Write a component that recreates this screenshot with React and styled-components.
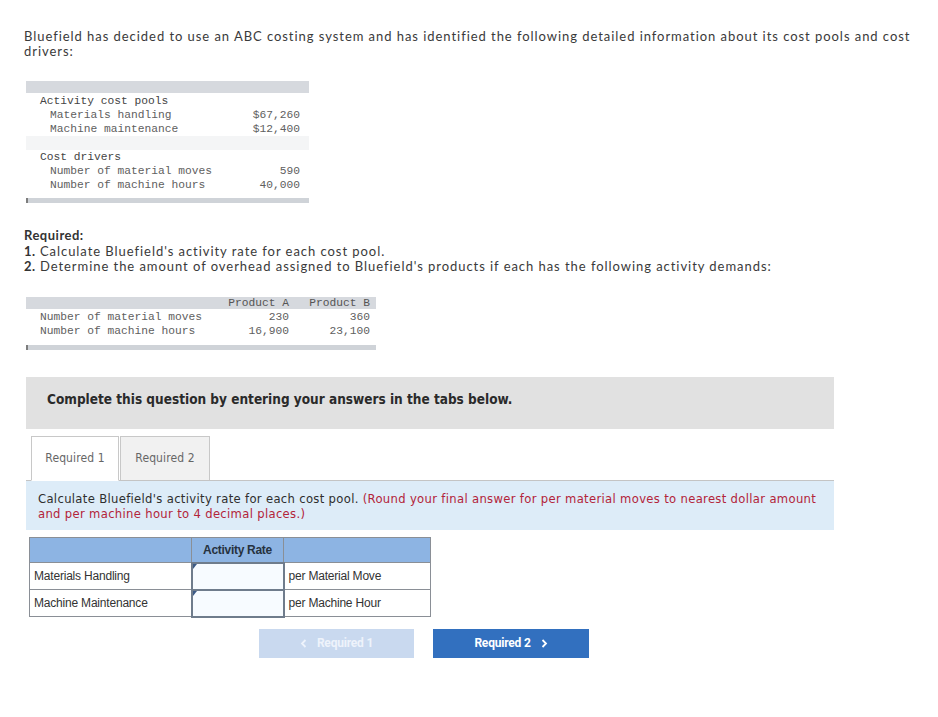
import React from 'react';
import styled, { createGlobalStyle } from 'styled-components';

const GlobalStyle = createGlobalStyle`
  body {
    margin: 0;
    background: #ffffff;
  }
`;

const Page = styled.div`
  padding: 29px 24px 40px 24px;
  font-family: Lato, "Open Sans", "Liberation Sans", sans-serif;
  color: #3a3a3a;
`;

const Intro = styled.p`
  margin: 0;
  font-size: 13px;
  line-height: 15px;
  letter-spacing: 0.95px;
  width: 910px;
`;

const MonoTable = styled.div`
  width: ${p => p.w}px;
  margin: ${p => p.top}px 0 0 2px;
  font-family: "Liberation Mono", "DejaVu Sans Mono", monospace;
  font-size: 11.25px;
  color: #5f5f5f;
`;

const HeadBar = styled.div`
  height: 12px;
  background: #d6d9de;
  margin-bottom: 1px;
  display: grid;
  grid-template-columns: ${p => p.cols || '1fr'};
  padding: 0 6px 0 14px;
  line-height: 12px;
  color: #555;
`;

const MonoRow = styled.div`
  height: 14px;
  line-height: 14px;
  display: grid;
  grid-template-columns: ${p => p.cols || '1fr auto'};
  padding: 0 ${p => p.right || 9}px 0 ${p => (p.indent ? 24 : 14)}px;
  background: ${p => (p.shade ? '#f4f5f6' : 'transparent')};
  color: ${p => (p.dark ? '#444' : '#606060')};
  white-space: nowrap;
`;

const Num = styled.span`
  text-align: right;
`;

const FootBar = styled.div`
  margin-top: ${p => p.gap}px;
  height: 5px;
  background: #cfd3d8;
  border-left: 2px solid #7d7d7d;
`;

const Required = styled.div`
  margin-top: 25px;
  font-size: 13px;
  line-height: 15.5px;
  letter-spacing: 0.95px;
`;

const Strong = styled.span`
  font-weight: 700;
  color: #333;
  letter-spacing: 0.5px;
`;

const Notice = styled.div`
  margin: 27px 0 0 2px;
  width: 808px;
  height: 52px;
  box-sizing: border-box;
  padding: 14px 21px 0 21px;
  background: #e1e1e1;
  font-family: "DejaVu Sans Condensed", "DejaVu Sans", sans-serif;
  font-weight: bold;
  font-size: 13.5px;
  line-height: 17px;
  color: #2a2a2a;
`;

const Panel = styled.div`
  margin: 7px 0 0 2px;
  width: 808px;
`;

const TabRow = styled.div`
  display: flex;
  padding-left: 5px;
  border-bottom: 1px solid #c4c4c4;
  height: 44px;
`;

const Tab = styled.div`
  box-sizing: border-box;
  width: ${p => p.w}px;
  height: ${p => (p.active ? 45 : 44)}px;
  border: 1px solid #c8c8c8;
  border-bottom: ${p => (p.active ? '1px solid #ffffff' : 'none')};
  background: ${p => (p.active ? '#ffffff' : '#f1f1f1')};
  margin-right: 1px;
  display: flex;
  align-items: center;
  justify-content: center;
  font-family: "DejaVu Sans Condensed", "DejaVu Sans", sans-serif;
  font-size: 12px;
  letter-spacing: 0.1px;
  color: #666;
  position: relative;
  z-index: 1;
`;

const Instruction = styled.div`
  background: #ddecf8;
  padding: 10px 12px 9px 12px;
  font-family: "DejaVu Sans Condensed", "DejaVu Sans", sans-serif;
  font-size: 12.9px;
  line-height: 15px;
  letter-spacing: 0.33px;
  color: #2e2e2e;
`;

const Hint = styled.span`
  color: #b3243a;
`;

const AnswerTable = styled.table`
  margin: 7px 0 0 3px;
  border-collapse: collapse;
  font-family: "Liberation Sans", Arial, sans-serif;
  font-size: 12px;
  color: #333;
`;

const HeadCell = styled.th`
  height: 24px;
  width: ${p => p.w}px;
  background: #8db4e3;
  border: 1px solid #8a8f96;
  font-weight: bold;
  font-size: 12px;
  color: #26323f;
  padding: 0;
  letter-spacing: -0.3px;
`;

const Cell = styled.td`
  height: 25px;
  border: 1px solid #8a8f96;
  padding: 0 0 0 4px;
  letter-spacing: -0.2px;
  white-space: nowrap;
`;

const InputCell = styled.td`
  height: 25px;
  border: 2px solid #6f7c8c;
  padding: 0;
  background: #f7fbff;
  position: relative;
`;

const Corner = styled.span`
  position: absolute;
  left: 0;
  top: 0;
  width: 0;
  height: 0;
  border-top: 5px solid #3c5a86;
  border-right: 4px solid transparent;
`;

const Nav = styled.div`
  display: flex;
  gap: 19px;
  margin-top: 11px;
  padding-left: 233px;
`;

const NavButton = styled.div`
  width: ${p => p.w}px;
  height: 29px;
  display: flex;
  align-items: center;
  justify-content: center;
  gap: 10px;
  background: ${p => (p.disabled ? '#c9d9ef' : '#3270bf')};
  color: ${p => (p.disabled ? '#eef3fb' : '#ffffff')};
  font-family: Roboto, "Liberation Sans", sans-serif;
  font-weight: bold;
  font-size: 12px;
  letter-spacing: -0.2px;
`;

const Chevron = ({ dir }) => (
  <svg width="7" height="9" viewBox="0 0 7 9">
    <path
      d={dir === 'left' ? 'M5.5 1 L2 4.5 L5.5 8' : 'M1.5 1 L5 4.5 L1.5 8'}
      fill="none"
      stroke="currentColor"
      strokeWidth="1.8"
    />
  </svg>
);

export default function App() {
  return (
    <Page>
      <GlobalStyle />
      <Intro>
        Bluefield has decided to use an ABC costing system and has identified the following detailed information about its cost pools and cost drivers:
      </Intro>

      <MonoTable w={283} top={22}>
        <HeadBar />
        <MonoRow dark>Activity cost pools</MonoRow>
        <MonoRow indent>
          <span>Materials handling</span>
          <Num>$67,260</Num>
        </MonoRow>
        <MonoRow indent>
          <span>Machine maintenance</span>
          <Num>$12,400</Num>
        </MonoRow>
        <MonoRow shade />
        <MonoRow dark>Cost drivers</MonoRow>
        <MonoRow indent>
          <span>Number of material moves</span>
          <Num>590</Num>
        </MonoRow>
        <MonoRow indent>
          <span>Number of machine hours</span>
          <Num>40,000</Num>
        </MonoRow>
        <FootBar gap={6} />
      </MonoTable>

      <Required>
        <Strong>Required:</Strong>
        <br />
        <Strong>1.</Strong> Calculate Bluefield's activity rate for each cost pool.
        <br />
        <Strong>2.</Strong> Determine the amount of overhead assigned to Bluefield's products if each has the following activity demands:
      </Required>

      <MonoTable w={350} top={22}>
        <HeadBar cols="175px 74px 81px">
          <span />
          <Num>Product A</Num>
          <Num>Product B</Num>
        </HeadBar>
        <MonoRow cols="175px 74px 81px" right={6}>
          <span>Number of material moves</span>
          <Num>230</Num>
          <Num>360</Num>
        </MonoRow>
        <MonoRow cols="175px 74px 81px" right={6}>
          <span>Number of machine hours</span>
          <Num>16,900</Num>
          <Num>23,100</Num>
        </MonoRow>
        <FootBar gap={7} />
      </MonoTable>

      <Notice>Complete this question by entering your answers in the tabs below.</Notice>

      <Panel>
        <TabRow>
          <Tab w={88} active>Required 1</Tab>
          <Tab w={90}>Required 2</Tab>
        </TabRow>
        <Instruction>
          Calculate Bluefield's activity rate for each cost pool.{' '}
          <Hint>(Round your final answer for per material moves to nearest dollar amount and per machine hour to 4 decimal places.)</Hint>
        </Instruction>

        <AnswerTable>
          <thead>
            <tr>
              <HeadCell w={161} />
              <HeadCell w={91}>Activity Rate</HeadCell>
              <HeadCell w={146} />
            </tr>
          </thead>
          <tbody>
            <tr>
              <Cell>Materials Handling</Cell>
              <InputCell><Corner /></InputCell>
              <Cell>per Material Move</Cell>
            </tr>
            <tr>
              <Cell>Machine Maintenance</Cell>
              <InputCell><Corner /></InputCell>
              <Cell>per Machine Hour</Cell>
            </tr>
          </tbody>
        </AnswerTable>

        <Nav>
          <NavButton w={155} disabled>
            <Chevron dir="left" />
            <span>Required 1</span>
          </NavButton>
          <NavButton w={156}>
            <span>Required 2</span>
            <Chevron dir="right" />
          </NavButton>
        </Nav>
      </Panel>
    </Page>
  );
}
